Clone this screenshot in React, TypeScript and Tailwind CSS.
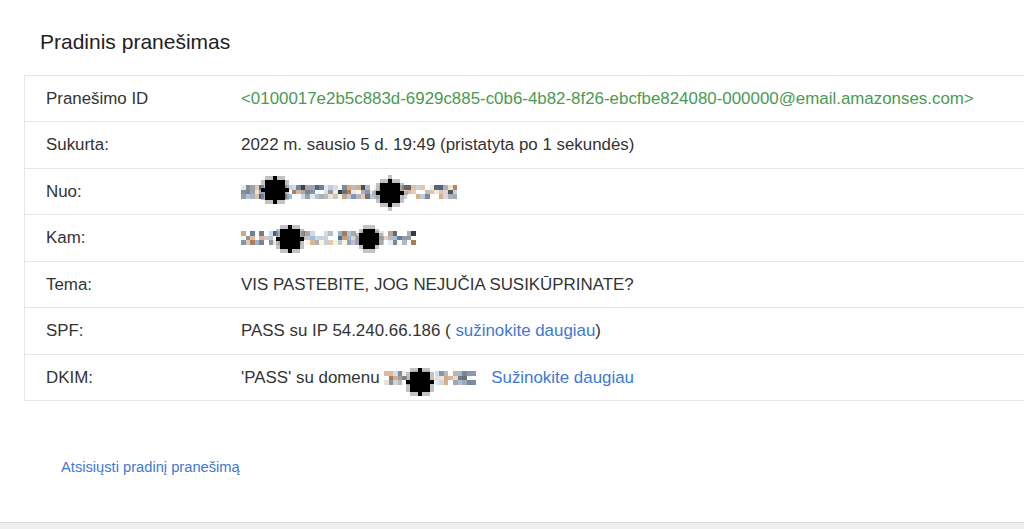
import React from "react";

const PALETTE = ["#8a8f99", "#5d6470", "#b9c9dc", "#d9a878", "#3e5f8f", "#c7ccd3", "#2f3440", "#ece0bd", "#8fb0d0", "#a06a3c", "#f3f3dc", "#6e7e94", "#c8956a"];

function hash(n: number) {
  let x = (n * 2654435761) >>> 0;
  x ^= x >>> 13;
  x = Math.imul(x, 1274126177) >>> 0;
  return (x ^ (x >>> 16)) >>> 0;
}

type Blob = { cx: number; cy: number; r: number };

// pixelated redaction strip with blocky black blobs on top
function Redacted({ w, h, seed, blobs }: { w: number; h: number; seed: number; blobs: Blob[] }) {
  const cell = 4.6;
  const cells: React.ReactElement[] = [];
  const cols = Math.floor(w / cell);
  const rows = Math.max(1, Math.round(h / cell));
  for (let c = 0; c < cols; c++) {
    for (let r = 0; r < rows; r++) {
      const v = hash(seed * 1000 + c * 31 + r * 7);
      if (v % 6 === 0) continue;
      cells.push(
        <rect
          key={`${c}-${r}`}
          x={c * cell}
          y={r * cell}
          width={cell}
          height={cell}
          fill={PALETTE[v % PALETTE.length]}
          opacity={0.7 + ((v >> 4) % 30) / 100}
        />
      );
    }
  }
  const halo: React.ReactElement[] = [];
  const core: React.ReactElement[] = [];
  blobs.forEach((b, i) => {
    const s = 4;
    const n = Math.ceil(b.r / s) + 1;
    for (let dx = -n; dx <= n; dx++) {
      for (let dy = -n; dy <= n; dy++) {
        const x = Math.round(b.cx + dx * s - s / 2);
        const y = Math.round(b.cy + dy * s - s / 2);
        const d = Math.hypot(dx * s, dy * s);
        if (d <= b.r - 1) {
          core.push(<rect key={`b${i}-${dx}-${dy}`} x={x} y={y} width={s} height={s} fill="#000" />);
        } else if (d <= b.r + 2.5) {
          halo.push(<rect key={`h${i}-${dx}-${dy}`} x={x} y={y} width={s} height={s} fill="#999" opacity={0.6} />);
        }
      }
    }
  });
  return (
    <svg width={w} height={h} className="overflow-visible shrink-0" viewBox={`0 0 ${w} ${h}`} shapeRendering="crispEdges">
      {cells}
      {halo}
      {core}
    </svg>
  );
}

const rows: { label: string; value: React.ReactNode }[] = [
  {
    label: "Pranešimo ID",
    value: (
      <span className="text-[#4a9a52]">
        &lt;0100017e2b5c883d-6929c885-c0b6-4b82-8f26-ebcfbe824080-000000@email.amazonses.com&gt;
      </span>
    ),
  },
  { label: "Sukurta:", value: "2022 m. sausio 5 d. 19:49 (pristatyta po 1 sekundės)" },
  {
    label: "Nuo:",
    value: (
      <Redacted
        w={220}
        h={14}
        seed={3}
        blobs={[
          { cx: 34, cy: 5, r: 13 },
          { cx: 149, cy: 8, r: 13.5 },
        ]}
      />
    ),
  },
  {
    label: "Kam:",
    value: (
      <Redacted
        w={177}
        h={13}
        seed={7}
        blobs={[
          { cx: 49, cy: 8, r: 13 },
          { cx: 128, cy: 8, r: 11.5 },
        ]}
      />
    ),
  },
  { label: "Tema:", value: "VIS PASTEBITE, JOG NEJUČIA SUSIKŪPRINATE?" },
  {
    label: "SPF:",
    value: (
      <span>
        PASS su IP 54.240.66.186 ({" "}
        <a className="text-[#3f78d6]" href="#">
          sužinokite daugiau
        </a>
        )
      </span>
    ),
  },
  {
    label: "DKIM:",
    value: (
      <span className="flex items-center">
        <span className="whitespace-pre">'PASS' su domenu </span>
        <Redacted w={95} h={13} seed={11} blobs={[{ cx: 36, cy: 11, r: 13 }]} />
        <a className="ml-3 text-[#3f78d6]" href="#">
          Sužinokite daugiau
        </a>
      </span>
    ),
  },
];

export default function App() {
  return (
    <div className="w-[1024px] h-[529px] overflow-hidden bg-white font-['Liberation_Sans',Arial,sans-serif] flex flex-col">
      <div className="h-[522px] shrink-0 pt-[30px]">
        <h1 className="pl-10 text-[21px] leading-6 text-[#222]">Pradinis pranešimas</h1>

        <div className="ml-6 mt-[21px] w-[1010px] border-t border-l border-[#e6e6e6]">
          {rows.map((r) => (
            <div
              key={r.label}
              className="h-[46.43px] flex items-center border-b border-[#e6e6e6] text-[16.9px] text-[#333]"
            >
              <div className="w-[216px] pl-[21px] shrink-0">{r.label}</div>
              <div className="flex items-center whitespace-nowrap">{r.value}</div>
            </div>
          ))}
        </div>

        <div className="mt-[56px] pl-[61px] text-[14.7px] leading-5">
          <a href="#" className="text-[#3f78d6]">
            Atsisiųsti pradinį pranešimą
          </a>
        </div>
      </div>
      <div className="flex-1 border-t border-[#dcdcdc] bg-[#efefef]" />
    </div>
  );
}
